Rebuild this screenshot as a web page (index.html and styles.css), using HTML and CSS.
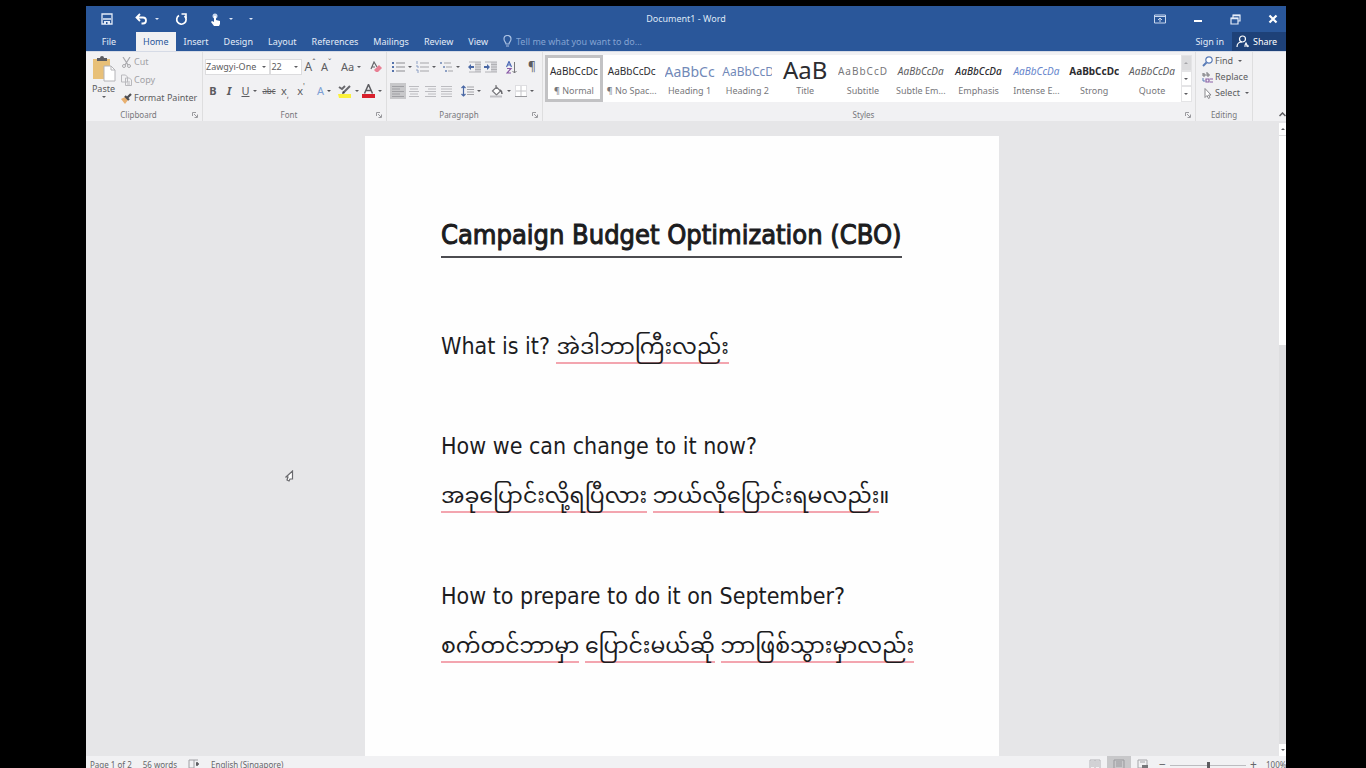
FILE: index.html
```html
<!DOCTYPE html>
<html lang="en">
<head>
    <meta charset="UTF-8">
    <meta name="viewport" content="width=device-width, initial-scale=1.0">
    <title>Document1 - Word</title>
    <link rel="stylesheet" href="styles.css">
</head>
<body>
    <div class="app">
        <!-- Title bar -->
        <header class="titlebar">
            <div class="quick">
                <button class="tb" aria-label="Save"><svg width="12" height="12" viewBox="0 0 12 12"><path d="M1 1h10v10H1z" fill="none" stroke="#e4ecf8" stroke-width="1.3"/><path d="M2 6h8" stroke="#e4ecf8" stroke-width="1.5"/><path d="M3 8h6v3H3z" fill="#e4ecf8"/><path d="M5 9h1.500v2H5z" fill="#2a579a"/></svg></button>
                <button class="tb undo" aria-label="Undo"><svg width="13" height="12" viewBox="0 0 13 12"><path d="M5 1L1.500 4.500 5 8M2 4.500h6c4 0 4 6 0 6H6.500" fill="none" stroke="#fff" stroke-width="1.8"/></svg><i class="caret"></i></button>
                <button class="tb" aria-label="Repeat"><svg width="13" height="13" viewBox="0 0 13 13"><path d="M4 2.500A4.700 4.700 0 1 0 9.500 3" fill="none" stroke="#fff" stroke-width="1.700"/><path d="M6.500 1h4.500v4.500" fill="none" stroke="#fff" stroke-width="1.600"/></svg></button>
                <button class="tb touch" aria-label="Touch mode"><svg width="12" height="13" viewBox="0 0 12 13"><circle cx="5" cy="3" r="2.500" fill="#c9d8ee"/><path d="M4 3h2v4l4 1v3l-1 2H4L1 9l1-1 2 1z" fill="#fff"/></svg><i class="caret"></i></button>
                <button class="tb" aria-label="Customize toolbar"><i class="caret"></i></button>
            </div>
            <div class="doc-name">Document1 - Word</div>
            <div class="window-buttons">
                <button class="tb" aria-label="Ribbon options"><svg width="12" height="10" viewBox="0 0 12 10"><path d="M.5 1h11v8H.5zM.5 2.500h11M6 8V4M4 6l2-2 2 2" fill="none" stroke="#c9d8ee"/></svg></button>
                <button class="tb" aria-label="Minimize"><svg width="10" height="10" viewBox="0 0 10 10"><path d="M1 7h8" stroke="#fff" stroke-width="2"/></svg></button>
                <button class="tb" aria-label="Restore"><svg width="11" height="11" viewBox="0 0 11 11"><path d="M1 4h7v6H1zM3 4V1h7v6H8" fill="none" stroke="#e4ecf8" stroke-width="1.200"/><path d="M1 4.500h7M3 1.500h7" stroke="#e4ecf8" stroke-width="1.500"/></svg></button>
                <button class="tb" aria-label="Close"><svg width="10" height="10" viewBox="0 0 10 10"><path d="M1.500 1.500l7 7M8.500 1.500l-7 7" stroke="#fff" stroke-width="2.200"/></svg></button>
            </div>
        </header>

        <!-- Tabs -->
        <nav class="tabs">
            <button class="tab file">File</button>
            <button class="tab active">Home</button>
            <button class="tab">Insert</button>
            <button class="tab">Design</button>
            <button class="tab">Layout</button>
            <button class="tab">References</button>
            <button class="tab">Mailings</button>
            <button class="tab">Review</button>
            <button class="tab">View</button>
            <label class="tell-me">
                <svg width="9" height="13" viewBox="0 0 9 13"><path d="M3 9C3 7 1 6.500 1 4a3.500 3.500 0 0 1 7 0c0 2.500-2 3-2 5zM3 11h3" fill="none" stroke="#a9c0e2" stroke-width="1.200"/></svg>
                <input type="text" placeholder="Tell me what you want to do..." aria-label="Tell me what you want to do">
            </label>
            <button class="tab sign-in">Sign in</button>
            <button class="share"><svg width="13" height="13" viewBox="0 0 13 13"><circle cx="6.500" cy="4" r="3" fill="none" stroke="#fff" stroke-width="1.200"/><path d="M1 12c0-3 2-5 5-5M9 10l1-2 2 4M8 11h5" fill="none" stroke="#fff" stroke-width="1.200"/></svg>Share</button>
        </nav>

        <!-- Ribbon -->
        <div class="ribbon">
            <section class="group clipboard">
                <div class="group-body">
                    <button class="paste">
                        <svg width="24" height="26" viewBox="0 0 24 26"><path d="M1 3h17v20H1z" fill="#e8c078"/><path d="M5 5V2h3a2 2 0 0 1 4 0h3v3z" fill="#5c5c60"/><path d="M12 10h7l4 4v11H12z" fill="#fff" stroke="#b4b4b8"/><path d="M19 10v4h4" fill="none" stroke="#b4b4b8"/></svg>
                        Paste
                        <i class="caret"></i>
                    </button>
                    <div class="stack">
                        <button class="row-btn off"><svg width="11" height="11" viewBox="0 0 11 11"><path d="M2 0l5 8M9 0L4 8" stroke="#a9a9ad" stroke-width="1.200"/><circle cx="3" cy="9" r="1.500" fill="none" stroke="#a9a9ad"/><circle cx="8" cy="9" r="1.500" fill="none" stroke="#a9a9ad"/></svg>Cut</button>
                        <button class="row-btn off"><svg width="11" height="12" viewBox="0 0 11 12"><path d="M.5 1h4l2 2v5h-6zM4.500 4h4l2 2v5.500h-6zM6 8h3M6 10h3" fill="#f1f1f3" stroke="#b9b9bd"/></svg>Copy</button>
                        <button class="row-btn"><svg width="11" height="11" viewBox="0 0 11 11"><path d="M0 6l4-2 3 3-3 4z" fill="#e8b070"/><path d="M4 3l4 4M6 5l4-4" stroke="#4c4c50" stroke-width="2.200"/></svg>Format Painter</button>
                    </div>
                </div>
                <div class="group-label with-launcher">Clipboard<svg class="launcher" width="6" height="6" viewBox="0 0 6 6"><path d="M.5 4V.5H4M2 2l3 3M5.500 2.500v3h-3" fill="none" stroke="#9a9a9e"/></svg></div>
            </section>

            <section class="group font">
                <div class="group-body tools">
                    <div class="tool-row">
                        <div class="combo name"><input type="text" value="Zawgyi-One" aria-label="Font"><i class="caret"></i></div>
                        <div class="combo size"><input type="text" value="22" aria-label="Font size"><i class="caret"></i></div>
                        <button class="ic grow" aria-label="Grow font">A<sup>ˆ</sup></button>
                        <button class="ic shrink" aria-label="Shrink font">A<sup>ˇ</sup></button>
                        <span class="sep"></span>
                        <button class="ic drop case">Aa<i class="caret"></i></button>
                        <span class="sep"></span>
                        <button class="ic" aria-label="Clear formatting"><svg width="12" height="12" viewBox="0 0 12 12"><path d="M1 8l3-7 3 5M2 6h3" fill="none" stroke="#66666a" stroke-width="1.200"/><path d="M4 9l5-5 3 3-4 4H6z" fill="#e87f93"/></svg></button>
                    </div>
                    <div class="tool-row">
                        <button class="ic bold">B</button>
                        <button class="ic italic">I</button>
                        <button class="ic drop underline"><u>U</u><i class="caret"></i></button>
                        <button class="ic strike"><s>abc</s></button>
                        <button class="ic script">x<sub>,</sub></button>
                        <button class="ic script">x<sup>'</sup></button>
                        <span class="sep"></span>
                        <button class="ic drop effects">A<i class="caret"></i></button>
                        <button class="ic drop" aria-label="Highlight"><svg width="14" height="14" viewBox="0 0 14 14"><path d="M0 10h13v4H1z" fill="#fbf13a"/><path d="M1 3l3 2 3-3M5 9l7-7" fill="none" stroke="#69696d" stroke-width="2"/><path d="M4 10l1-3 2 2z" fill="#424246"/></svg><i class="caret"></i></button>
                        <button class="ic drop" aria-label="Font color"><svg width="13" height="14" viewBox="0 0 13 14"><path d="M0 10h13v4H0z" fill="#d8202c"/><path d="M2.500 9.500l4-9 4 9M4 6.500h5" fill="none" stroke="#5c5c60" stroke-width="1.500"/></svg><i class="caret"></i></button>
                    </div>
                </div>
                <div class="group-label with-launcher">Font<svg class="launcher" width="6" height="6" viewBox="0 0 6 6"><path d="M.5 4V.5H4M2 2l3 3M5.500 2.500v3h-3" fill="none" stroke="#9a9a9e"/></svg></div>
            </section>

            <section class="group paragraph">
                <div class="group-body tools">
                    <div class="tool-row">
                        <button class="ic drop" aria-label="Bullets"><svg width="13" height="12" viewBox="0 0 13 12"><path d="M4 2h9M4 6h9M4 10h9" stroke="#8d8d91"/><path d="M0 2h2M0 6h2M0 10h2" stroke="#5573ab" stroke-width="2"/></svg><i class="caret"></i></button>
                        <button class="ic drop" aria-label="Numbering"><svg width="13" height="12" viewBox="0 0 13 12"><path d="M4 2h9M4 6h9M4 10h9" stroke="#a5a5a9"/><path d="M1 0v3M0 5h2v2M0 9h2v3" fill="none" stroke="#8da0c4"/></svg><i class="caret"></i></button>
                        <button class="ic drop" aria-label="Multilevel list"><svg width="13" height="12" viewBox="0 0 13 12"><path d="M4 2h7M6 6h6M8 10h5" stroke="#a5a5a9"/><path d="M0 2h2M3 6h2M5 10h2" stroke="#8da0c4" stroke-width="2"/></svg><i class="caret"></i></button>
                        <span class="sep"></span>
                        <button class="ic" aria-label="Decrease indent"><svg width="13" height="12" viewBox="0 0 13 12"><path d="M7 1h6v10H7z" fill="#d2d2d6"/><path d="M1 1h12M7 3.500h6M7 6h6M7 8.500h6M1 11h12" stroke="#b2b2b6"/><path d="M0 6l3-3v2h3v2H3v2z" fill="#4a68a5"/></svg></button>
                        <button class="ic" aria-label="Increase indent"><svg width="13" height="12" viewBox="0 0 13 12"><path d="M7 1h6v10H7z" fill="#d2d2d6"/><path d="M1 1h12M7 3.500h6M7 6h6M7 8.500h6M1 11h12" stroke="#b2b2b6"/><path d="M6 6L3 3v2H0v2h3v2z" fill="#4a68a5"/></svg></button>
                        <span class="sep"></span>
                        <button class="ic" aria-label="Sort"><svg width="11" height="13" viewBox="0 0 11 13"><path d="M.5 6L3 .5 5.500 6M1.500 4h3" fill="none" stroke="#4a68b5" stroke-width="1.200"/><path d="M1 7.500h4L1 12h4" fill="none" stroke="#8858a5" stroke-width="1.200"/><path d="M8.500 1v11M6.500 10l2 2 2-2" fill="none" stroke="#77777b"/></svg></button>
                        <span class="sep"></span>
                        <button class="ic pilcrow">¶</button>
                    </div>
                    <div class="tool-row">
                        <button class="ic pressed" aria-label="Align left"><svg width="12" height="11" viewBox="0 0 12 11"><path d="M0 .5h12M0 3h8M0 5.500h12M0 8h8M0 10.500h12" stroke="#a0a0a4"/></svg></button>
                        <button class="ic" aria-label="Center"><svg width="12" height="11" viewBox="0 0 12 11"><path d="M1 .5h10M2 3h8M1 5.500h10M2 8h8M1 10.500h10" stroke="#bcbcc0"/></svg></button>
                        <button class="ic" aria-label="Align right"><svg width="12" height="11" viewBox="0 0 12 11"><path d="M1 .5h11M4 3h8M1 5.500h11M4 8h8M1 10.500h11" stroke="#bcbcc0"/></svg></button>
                        <button class="ic" aria-label="Justify"><svg width="12" height="11" viewBox="0 0 12 11"><path d="M1 .5h11M1 3h11M1 5.500h11M1 8h11M1 10.500h11" stroke="#bcbcc0"/></svg></button>
                        <span class="sep"></span>
                        <button class="ic drop" aria-label="Line spacing"><svg width="13" height="12" viewBox="0 0 13 12"><path d="M6 2h7M6 4.500h7M6 7h7M6 9.500h7" stroke="#a2a2a6"/><path d="M2.500 1v10M.5 3l2-2 2 2M.5 9l2 2 2-2" fill="none" stroke="#4a68a5" stroke-width="1.200"/></svg><i class="caret"></i></button>
                        <span class="sep"></span>
                        <button class="ic drop" aria-label="Shading"><svg width="14" height="13" viewBox="0 0 14 13"><path d="M2.500 6l4-4 4 4-4 4zM6 4V0" fill="#fff" stroke="#77777b" stroke-width="1.200"/><path d="M10 5c2 1 2 2 2 4" fill="none" stroke="#66666a" stroke-width="1.500"/><path d="M0 11.500h12" stroke="#c0c0c4" stroke-width="2"/></svg><i class="caret"></i></button>
                        <button class="ic drop" aria-label="Borders"><svg width="12" height="12" viewBox="0 0 12 12"><path d="M.5.5h11v11H.5z" fill="#fff" stroke="#c4c4c8" stroke-dasharray="1 1"/><path d="M6 1v10M1 6h10" stroke="#c4c4c8"/><path d="M0 11.500h12" stroke="#99999d"/></svg><i class="caret"></i></button>
                    </div>
                </div>
                <div class="group-label with-launcher">Paragraph<svg class="launcher" width="6" height="6" viewBox="0 0 6 6"><path d="M.5 4V.5H4M2 2l3 3M5.500 2.500v3h-3" fill="none" stroke="#9a9a9e"/></svg></div>
            </section>

            <section class="group styles">
                <div class="group-body gallery">
                    <button class="style selected"><span class="sample">AaBbCcDc</span>¶ Normal</button>
                    <button class="style"><span class="sample">AaBbCcDc</span>¶ No Spac...</button>
                    <button class="style"><span class="sample h1">AaBbCc</span>Heading 1</button>
                    <button class="style"><span class="sample h2">AaBbCcD</span>Heading 2</button>
                    <button class="style"><span class="sample title">AaB</span>Title</button>
                    <button class="style"><span class="sample subtitle">AaBbCcD</span>Subtitle</button>
                    <button class="style"><span class="sample subtle">AaBbCcDa</span>Subtle Em...</button>
                    <button class="style"><span class="sample emphasis">AaBbCcDa</span>Emphasis</button>
                    <button class="style"><span class="sample intense">AaBbCcDa</span>Intense E...</button>
                    <button class="style"><span class="sample strong">AaBbCcDc</span>Strong</button>
                    <button class="style"><span class="sample subtle">AaBbCcDa</span>Quote</button>
                    <div class="gallery-nav">
                        <button class="disabled" aria-label="Previous styles"><i class="caret up"></i></button>
                        <button aria-label="Next styles"><i class="caret"></i></button>
                        <button aria-label="More styles"><i class="caret"></i></button>
                    </div>
                </div>
                <div class="group-label with-launcher">Styles<svg class="launcher" width="6" height="6" viewBox="0 0 6 6"><path d="M.5 4V.5H4M2 2l3 3M5.500 2.500v3h-3" fill="none" stroke="#9a9a9e"/></svg></div>
            </section>

            <section class="group editing">
                <div class="group-body stack">
                    <button class="row-btn"><svg width="11" height="11" viewBox="0 0 11 11"><circle cx="7" cy="4" r="3.200" fill="#fff" stroke="#5a7cb8" stroke-width="1.200"/><path d="M4.500 6.500L1 10" stroke="#5a7cb8" stroke-width="2"/></svg>Find<i class="caret"></i></button>
                    <button class="row-btn"><svg width="11" height="11" viewBox="0 0 11 11"><path d="M1 1v3h2V2H1M5 0v4h2V2H5" fill="none" stroke="#76767a"/><path d="M4 7h3v3H4zM8 7h3M8 10h3" fill="none" stroke="#8a60a5" stroke-width="1.200"/><path d="M1 6v3h2" fill="none" stroke="#5a7cb8"/></svg>Replace</button>
                    <button class="row-btn"><svg width="11" height="11" viewBox="0 0 11 11"><path d="M3 .5v9l2-2 1.500 3 1.500-1L6.500 7H9z" fill="#fff" stroke="#88888c"/></svg>Select<i class="caret"></i></button>
                </div>
                <div class="group-label">Editing</div>
            </section>

            <button class="collapse" aria-label="Collapse ribbon"><svg width="7" height="5" viewBox="0 0 7 5"><path d="M.5 4l3-3 3 3" fill="none" stroke="#5c5c60" stroke-width="1.500"/></svg></button>
        </div>

        <!-- Document area -->
        <main class="workspace">
            <svg class="pointer" width="9" height="12" viewBox="0 0 9 12"><path d="M7.500 1v8H5L4 11 2 10l1-3H1z" fill="#fff" stroke="#6a6a6e" stroke-width="1.200"/></svg>
            <article class="page">
                <h1><span>Campaign Budget Optimization (CBO)</span></h1>
                <p>What is it? <span class="my spell">အဲဒါဘာကြီးလည်း</span></p>
                <p></p>
                <p>How we can change to it now?</p>
                <p class="my"><span class="spell">အခုပြောင်းလို့ရပြီလား</span> <span class="spell">ဘယ်လိုပြောင်းရမလည်း</span>။</p>
                <p></p>
                <p>How to prepare to do it on September?</p>
                <p class="my"><span class="spell">စက်တင်ဘာမှာ</span> <span class="spell">ပြောင်းမယ်ဆို</span> <span class="spell">ဘာဖြစ်သွားမှာလည်း</span></p>
            </article>
            <div class="scrollbar">
                <button aria-label="Scroll up"><i class="caret up"></i></button>
                <div class="thumb"></div>
                <button aria-label="Scroll down"><i class="caret"></i></button>
            </div>
        </main>

        <!-- Status bar -->
        <footer class="status">
            <span>Page 1 of 2</span>
            <span>56 words</span>
            <svg width="12" height="10" viewBox="0 0 12 10"><path d="M1 1h5v8H1zM6 1h4" fill="none" stroke="#a0a0a4"/><path d="M8 5h3M9 3v4" stroke="#55555a" stroke-width="1.500"/></svg>
            <span>English (Singapore)</span>
            <div class="views">
                <button aria-label="Read mode"><svg width="12" height="10" viewBox="0 0 12 10"><path d="M1 1h10v9H1zM6 1v9M2 3h3M7 3h3M2 5h3M7 5h3M2 7h3M7 7h3" fill="none" stroke="#b2b2b6"/></svg></button>
                <button class="current" aria-label="Print layout"><svg width="12" height="10" viewBox="0 0 12 10"><path d="M1 1h10v9H1zM3 3h6M3 5h6M3 7h6" fill="none" stroke="#99999d"/></svg></button>
                <button aria-label="Web layout"><svg width="12" height="10" viewBox="0 0 12 10"><path d="M1 1h9v8H1zM3 3h5" fill="none" stroke="#a5a5a9"/><path d="M5 6h6v3H5z" fill="#77777b"/></svg></button>
            </div>
            <div class="zoom">
                <button aria-label="Zoom out">−</button>
                <input type="range" min="10" max="190" value="100" aria-label="Zoom">
                <button aria-label="Zoom in">+</button>
            </div>
            <span class="percent">100%</span>
        </footer>
    </div>
</body>
</html>
```
FILE: styles.css
```css
* {
    margin: 0;
    padding: 0;
    box-sizing: border-box;
}

body {
    background: #000;
    font-family: "Noto Sans", "Open Sans", sans-serif;
    font-size: 9px;
    line-height: 12px;
    color: #5c5c60;
    overflow: hidden;
}

button,
input {
    font: inherit;
    color: inherit;
    background: none;
    border: none;
    white-space: nowrap;
}

svg {
    display: block;
    flex: none;
}

.app {
    display: flex;
    flex-direction: column;
    height: 100vh;
    padding: 6px 80px 0 86px;
}

.caret {
    flex: none;
    border: 2px solid transparent;
    border-top-color: currentColor;
    border-bottom: none;
}

.caret.up {
    border-top: none;
    border-bottom: 2px solid currentColor;
}

/* Title bar */
.titlebar {
    display: grid;
    grid-template-columns: 1fr auto 1fr;
    align-items: center;
    height: 26px;
    background: #2a579a;
    color: #dfe8f6;
}

.tb {
    display: flex;
    align-items: center;
    gap: 7px;
}

.quick {
    display: flex;
    align-items: center;
    gap: 16px;
    padding-left: 15px;
}

.quick .undo,
.quick .touch {
    margin-left: 6px;
}

.window-buttons {
    display: flex;
    justify-content: flex-end;
    align-items: center;
    gap: 27px;
    padding-right: 8px;
}

/* Tabs */
.tabs {
    display: flex;
    gap: 1px;
    height: 19px;
    background: #2a579a;
    color: #e4ecf8;
}

.tab {
    padding: 0 7px;
}

.tab.file {
    width: 49px;
    padding-right: 10px;
}

.tab.active {
    background: #f1f1f3;
    color: #2a579a;
}

.tell-me {
    display: flex;
    flex: 1;
    align-items: center;
    gap: 4px;
    padding-left: 7px;
}

.tell-me input {
    width: 160px;
}

.tell-me input::placeholder {
    color: #84a3d2;
    opacity: 1;
}

.share {
    display: flex;
    align-items: center;
    gap: 4px;
    width: 54px;
    padding-left: 4px;
    background: #1e4178;
    color: #fff;
}

/* Ribbon */
.ribbon {
    display: flex;
    height: 70px;
    background: #f1f1f3;
    border-top: 1px solid #d6dbe6;
}

.group {
    display: flex;
    flex-direction: column;
    flex: none;
    border-right: 1px solid #dededf;
}

.group-body {
    flex: 1;
}

.group-label {
    display: flex;
    align-items: center;
    justify-content: center;
    position: relative;
    height: 13px;
    font-size: 8px;
    color: #77777b;
}

.with-launcher {
    padding-right: 11px;
}

.launcher {
    position: absolute;
    right: 4px;
    top: 4px;
}

.clipboard {
    width: 117px;
}

.clipboard .group-body {
    display: flex;
}

.paste {
    display: flex;
    flex-direction: column;
    align-items: center;
    gap: 1px;
    width: 35px;
    padding-top: 4px;
}

.stack {
    display: flex;
    flex-direction: column;
    gap: 4px;
    padding-top: 4px;
}

.clipboard .stack {
    gap: 6px;
}

.row-btn {
    display: flex;
    align-items: center;
    gap: 2px;
    height: 12px;
}

.row-btn .caret {
    margin-left: 3px;
}

.row-btn.off {
    color: #a2a2a6;
}

.font {
    width: 184px;
}

.paragraph {
    width: 156px;
}

.tools {
    display: flex;
    flex-direction: column;
    gap: 8px;
    padding: 7px 2px 0;
}

.paragraph .tools {
    padding-left: 3px;
}

.tool-row {
    display: flex;
    align-items: center;
    height: 16px;
}

.sep {
    width: 5px;
}

.combo {
    display: flex;
    align-items: center;
    height: 16px;
    padding-right: 3px;
    background: #fff;
    border: 1px solid #dcdcde;
}

.combo input {
    flex: 1;
    width: 20px;
}

.combo.name {
    width: 66px;
}

.combo.size {
    width: 32px;
}

.ic {
    display: flex;
    align-items: center;
    justify-content: center;
    flex: none;
    width: 16px;
    height: 16px;
    font-size: 11px;
}

.ic.drop {
    gap: 3px;
    width: 24px;
}

.ic sup,
.ic sub {
    font-size: 8px;
    line-height: 8px;
}

.ic sup {
    align-self: flex-start;
}

.ic sub {
    align-self: flex-end;
}

.ic.grow {
    font-size: 12px;
}

.ic.bold {
    font-weight: bold;
}

.ic.italic {
    font-style: italic;
    font-weight: bold;
}

.ic.strike {
    font-size: 8px;
}

.ic.effects {
    color: #7d9fd4;
}

.ic.effects .caret {
    color: #4c4c50;
}

.ic.pilcrow {
    font-size: 12px;
}

.ic.pressed {
    background: #c8c8ca;
}

/* Styles gallery */
.group.styles {
    flex: 1;
    min-width: 0;
}

.gallery {
    display: flex;
    margin: 3px 3px 6px 2px;
    background: #fff;
}

.style {
    display: flex;
    flex-direction: column;
    align-items: center;
    flex: 1;
    min-width: 0;
    overflow: hidden;
    color: #77777b;
    border: 3px solid transparent;
}

.style.selected {
    border-color: #c2c2c4;
}

.sample {
    width: 50px;
    height: 27px;
    line-height: 27px;
    overflow: hidden;
    font-size: 10px;
    color: #2c2c30;
}

.sample.h1 {
    font-size: 14px;
    color: #7289b8;
}

.sample.h2 {
    font-size: 12px;
    color: #7289b8;
}

.sample.title {
    font-size: 24px;
    line-height: 24px;
}

.sample.subtitle {
    letter-spacing: 1px;
    color: #77777b;
}

.sample.subtle {
    font-style: italic;
    color: #5c5c60;
}

.sample.emphasis {
    font-style: italic;
    font-weight: 500;
}

.sample.intense {
    font-style: italic;
    color: #6685cc;
}

.sample.strong {
    font-weight: bold;
}

.gallery-nav {
    display: flex;
    flex-direction: column;
    width: 11px;
}

.gallery-nav button {
    display: flex;
    flex: 1;
    align-items: center;
    justify-content: center;
    border: 1px solid #e4e4e6;
}

.gallery-nav .disabled {
    background: #dcdcde;
    color: #a5a5a9;
}

.editing {
    width: 57px;
}

.editing .stack {
    padding-top: 3px;
    padding-left: 6px;
}

.collapse {
    display: flex;
    align-items: flex-end;
    justify-content: flex-end;
    width: 33px;
    padding-bottom: 4px;
}

/* Document area */
.workspace {
    display: flex;
    justify-content: center;
    flex: 1;
    min-height: 0;
    position: relative;
    overflow: hidden;
    background: #e6e6e8;
}

.pointer {
    position: absolute;
    left: 199px;
    top: 349px;
}

.page {
    width: 634px;
    margin-top: 15px;
    margin-right: 8px;
    padding: 74px 12px 0 76px;
    background: #fefefe;
    color: #1c1c1e;
    font-family: "DejaVu Sans Condensed", "Noto Sans Myanmar", "Padauk", sans-serif;
    font-size: 23px;
}

.page h1 {
    height: 111px;
    padding-top: 4px;
    font-size: 27px;
    font-weight: normal;
    line-height: 42px;
    -webkit-text-stroke: 1px currentColor;
}

.page h1 span {
    display: inline-block;
    border-bottom: 2px solid #4c4c50;
}

.page p {
    height: 50px;
    line-height: 50px;
    white-space: nowrap;
}

.page .my {
    font-family: "Noto Sans Myanmar", "Padauk", "Noto Sans", sans-serif;
    font-size: 22px;
}

.page p.my {
    padding-top: 2px;
}

.page .spell {
    display: inline-block;
    line-height: 26px;
    border-bottom: 2px solid #f3a5af;
}

.scrollbar {
    display: flex;
    flex-direction: column;
    position: absolute;
    top: 2px;
    right: 0;
    bottom: 0;
    width: 7px;
    background: #dedee0;
}

.scrollbar button {
    display: flex;
    align-items: center;
    justify-content: center;
    height: 12px;
    background: #fff;
}

.scrollbar .thumb {
    height: 33%;
    margin: 1px 0 auto;
    background: #fff;
}

/* Status bar */
.status {
    display: flex;
    gap: 11px;
    height: 12px;
    padding: 3px 0 0 4px;
    overflow: hidden;
    background: #f1f1f3;
    font-size: 8px;
    color: #66666a;
    white-space: nowrap;
}

.views {
    display: flex;
    margin: -3px -8px 0 auto;
}

.views button {
    display: flex;
    justify-content: center;
    width: 24px;
    height: 16px;
    padding-top: 3px;
}

.views .current {
    background: #c8c8ca;
}

.zoom {
    display: flex;
    gap: 3px;
}

.zoom button {
    width: 9px;
    font-size: 12px;
}

.zoom input {
    appearance: none;
    width: 76px;
    height: 1px;
    margin-top: 6px;
    background: #bcbcc0;
}

.zoom input::-webkit-slider-thumb {
    appearance: none;
    width: 3px;
    height: 8px;
    background: #5c5c60;
}

.percent {
    width: 20px;
    margin-left: -3px;
    overflow: hidden;
}
```
